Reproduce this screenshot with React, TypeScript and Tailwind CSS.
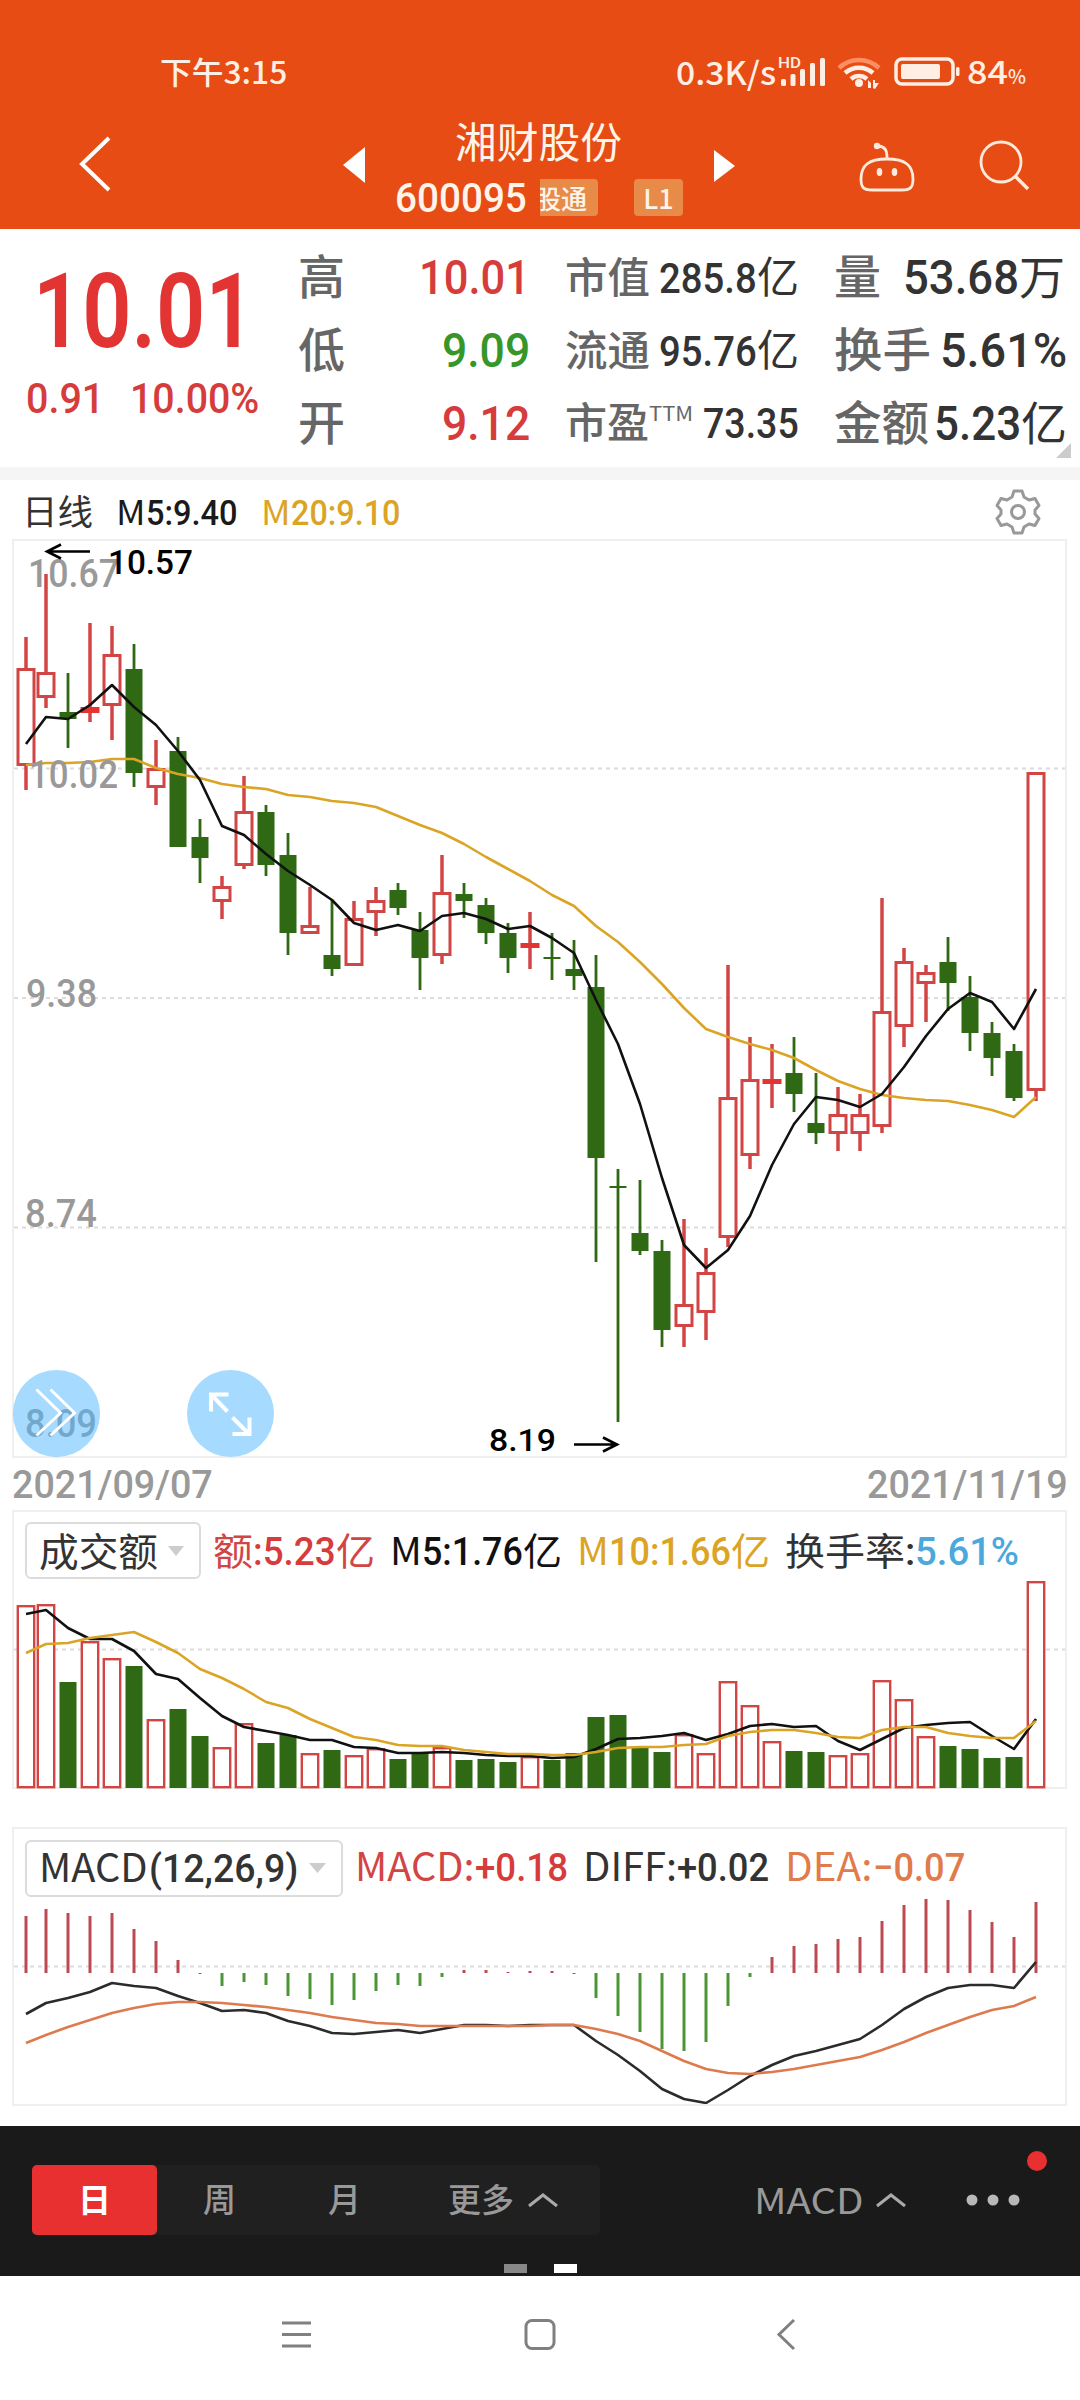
import React, { useLayoutEffect, useRef } from 'react';
import clsx from 'clsx';

type Point = [number, number];
// high, body top, body bottom, low, direction (u: hollow, f: flat up, d: down)
type Candle = [number, number, number, number, 'u' | 'f' | 'd'];

const cjk = "font-['Noto_Sans_CJK_SC','Noto_Sans',sans-serif]";
const num = "font-['Roboto','Noto_Sans_CJK_SC',sans-serif] font-medium";

const RED = '#d24545';
const GREEN = '#2f6914';
const GOLD = '#dba424';

const xs = Array.from({ length: 47 }, (_, i) => (i === 0 ? 26 : 46 + 22 * (i - 1)));

const candles: Candle[] = [
  [637, 668, 766, 790, 'u'], [574, 672, 698, 708, 'u'], [673, 712, 719, 748, 'd'], [623, 707, 713, 722, 'f'],
  [626, 654, 706, 740, 'u'], [644, 669, 773, 787, 'd'], [740, 768, 788, 805, 'u'], [737, 751, 847, 847, 'd'],
  [819, 837, 858, 883, 'd'], [876, 886, 902, 919, 'u'], [776, 811, 866, 869, 'u'], [805, 812, 865, 876, 'd'],
  [833, 855, 933, 955, 'd'], [887, 925, 934, 934, 'u'], [900, 955, 969, 976, 'd'], [901, 918, 966, 966, 'u'],
  [887, 900, 913, 936, 'u'], [883, 890, 908, 915, 'd'], [912, 930, 958, 990, 'd'], [855, 892, 956, 964, 'u'],
  [883, 894, 901, 918, 'd'], [898, 905, 933, 944, 'd'], [923, 933, 958, 973, 'd'], [912, 943, 948, 969, 'f'],
  [933, 957, 959, 980, 'd'], [940, 969, 976, 990, 'd'], [955, 987, 1158, 1262, 'd'], [1169, 1186, 1188, 1422, 'd'],
  [1180, 1233, 1251, 1255, 'd'], [1240, 1251, 1330, 1347, 'd'], [1219, 1304, 1327, 1347, 'u'], [1248, 1272, 1313, 1340, 'u'],
  [965, 1097, 1238, 1247, 'u'], [1037, 1079, 1156, 1169, 'u'], [1044, 1079, 1084, 1108, 'f'], [1037, 1073, 1094, 1112, 'd'],
  [1073, 1123, 1133, 1144, 'd'], [1087, 1114, 1134, 1151, 'u'], [1094, 1114, 1134, 1151, 'u'], [898, 1011, 1127, 1133, 'u'],
  [948, 961, 1027, 1047, 'u'], [965, 972, 984, 1022, 'u'], [937, 962, 983, 1011, 'd'], [976, 997, 1033, 1051, 'd'],
  [1022, 1033, 1058, 1076, 'd'], [1044, 1051, 1098, 1101, 'd'], [772, 772, 1091, 1101, 'u'],
];

const ma5 = [
  744, 717, 719, 705, 685, 707, 725, 751, 780, 826, 835, 854, 871, 885, 900, 923, 930, 925, 931, 916, 913, 919, 929, 926,
  938, 953, 1000, 1044, 1104, 1178, 1245, 1268, 1250, 1216, 1165, 1124, 1097, 1100, 1107, 1094, 1067, 1036, 1009, 993,
  1002, 1029, 989,
];
const ma20 = [
  765, 763, 763, 762, 759, 759, 768, 774, 778, 784, 787, 789, 795, 797, 801, 803, 807, 816, 825, 833, 844, 857, 869, 881,
  895, 906, 926, 942, 962, 984, 1008, 1029, 1037, 1044, 1050, 1058, 1070, 1081, 1089, 1095, 1098, 1100, 1101, 1105, 1110,
  1117, 1097,
];

const volumes = [
  1605, 1604, 1682, 1641, 1658, 1666, 1719, 1709, 1736, 1747, 1723, 1743, 1735, 1753, 1750, 1755, 1748, 1759, 1753, 1747,
  1760, 1759, 1762, 1756, 1760, 1753, 1717, 1715, 1748, 1752, 1734, 1753, 1681, 1705, 1741, 1751, 1752, 1755, 1753, 1680,
  1699, 1736, 1746, 1749, 1758, 1757, 1581,
];
const vol5 = [
  1614, 1610, 1628, 1639, 1639, 1651, 1674, 1679, 1698, 1716, 1727, 1731, 1735, 1740, 1740, 1747, 1748, 1753, 1753, 1752,
  1753, 1755, 1756, 1756, 1758, 1757, 1749, 1739, 1738, 1736, 1733, 1740, 1734, 1726, 1724, 1727, 1726, 1741, 1750, 1739,
  1728, 1725, 1723, 1722, 1736, 1749, 1719,
];
const vol10 = [
  1653, 1644, 1643, 1638, 1635, 1632, 1642, 1653, 1669, 1678, 1689, 1702, 1708, 1719, 1728, 1737, 1740, 1745, 1746, 1746,
  1750, 1752, 1754, 1754, 1755, 1755, 1752, 1748, 1747, 1747, 1745, 1744, 1736, 1732, 1730, 1730, 1733, 1737, 1738, 1730,
  1727, 1727, 1733, 1736, 1738, 1738, 1721,
];

const hist = [
  1916, 1909, 1913, 1916, 1913, 1929, 1941, 1960, 1974, 1986, 1982, 1985, 1996, 1999, 2005, 2000, 1991, 1985, 1986, 1977,
  1970, 1970, 1972, 1971, 1971, 1974, 1998, 2016, 2032, 2049, 2051, 2042, 2006, 1977, 1957, 1946, 1944, 1939, 1937, 1921,
  1905, 1899, 1900, 1910, 1922, 1937, 1902,
];
const diff = [
  2014, 2003, 1998, 1992, 1983, 1986, 1988, 1996, 2003, 2011, 2010, 2013, 2021, 2026, 2033, 2034, 2032, 2030, 2033, 2029,
  2025, 2025, 2026, 2025, 2025, 2025, 2041, 2055, 2071, 2089, 2099, 2103, 2090, 2076, 2065, 2056, 2051, 2045, 2039, 2025,
  2009, 1997, 1988, 1985, 1985, 1988, 1962,
];
const dea = [
  2043, 2035, 2027, 2020, 2013, 2008, 2004, 2002, 2002, 2003, 2005, 2007, 2010, 2013, 2017, 2020, 2023, 2024, 2026, 2026,
  2026, 2026, 2026, 2026, 2025, 2025, 2029, 2034, 2041, 2051, 2061, 2069, 2073, 2074, 2072, 2069, 2065, 2061, 2057, 2050,
  2042, 2033, 2025, 2017, 2010, 2006, 1997,
];

const toPoints = (ys: number[]) => ys.map((y, i): Point => [xs[i], y]).join(' ');

interface FitProps {
  className?: string;
  children: React.ReactNode;
}

// Squeezes or stretches one line of text to the width set on the outer box
const Fit: React.FC<FitProps> = ({ className = '', children }) => {
  const outer = useRef<HTMLDivElement>(null);
  const inner = useRef<HTMLSpanElement>(null);

  useLayoutEffect(() => {
    if (!outer.current || !inner.current) return;
    const scale = outer.current.clientWidth / inner.current.offsetWidth;
    inner.current.style.transform = `scaleX(${scale})`;
  }, []);

  return (
    <div className={clsx('shrink-0 whitespace-nowrap leading-none', className)}>
      <span ref={inner} className="inline-block origin-left">{children}</span>
      <div ref={outer} className="h-0 w-full" />
    </div>
  );
};

const Line = ({ ys, color, width = 2.6 }: { ys: number[]; color: string; width?: number }) => (
  <polyline points={toPoints(ys)} fill="none" stroke={color} strokeWidth={width} strokeLinejoin="round" />
);

const Grid = ({ y }: { y: number }) => (
  <line x1="14" x2="1066" y1={y} y2={y} stroke="#dcdcdc" strokeWidth="2" strokeDasharray="4 4" />
);

const ChartText = ({ x, y, w, size = 38, color = '#999', children }: {
  x: number; y: number; w: number; size?: number; color?: string; children: string;
}) => (
  <text x={x} y={y} textLength={w} lengthAdjust="spacingAndGlyphs" fontSize={size} fill={color} className={num}>
    {children}
  </text>
);

const StatusBar = () => (
  <div className="flex h-[118px] items-end pb-[28px] pl-[160px] text-[#ffeee4]">
    <Fit className={clsx(cjk, 'mb-[4px] w-[127px] text-[31px] font-medium')}>下午3:15</Fit>
    <Fit className={clsx(cjk, 'mb-[3px] ml-[389px] w-[100px] text-[32px] font-medium')}>0.3K/s</Fit>
    <svg className="ml-[2px] overflow-visible" width="252" height="36" viewBox="778 54 252 36">
      <text x="778" y="67.5" textLength="23" lengthAdjust="spacingAndGlyphs" fontSize="14" fill="#ffeee4" className={num}>HD</text>
      <g fill="#ffeee4">
        <rect x="781" y="79" width="5" height="7" rx="1.5" />
        <rect x="790.5" y="74" width="5" height="12" rx="1.5" />
        <rect x="800" y="69" width="5" height="17" rx="1.5" />
        <rect x="810" y="63" width="5" height="23" rx="1.5" />
        <rect x="820" y="58" width="5" height="28" rx="1.5" />
        <circle cx="859" cy="83" r="4" />
        <path d="M868 80l3 3v5h-3zM873 88V80h2v3h4l-4 6z" />
        <rect x="901" y="64" width="39" height="15" rx="2" />
        <rect x="956" y="67" width="3.5" height="9" rx="1.5" />
      </g>
      <g fill="none">
        <path d="M839 68a29 29 0 0 1 40 0" stroke="#ff8f62" strokeWidth="4.5" />
        <path d="M845 73a21 21 0 0 1 28 0M851 79a12.5 12.5 0 0 1 16 0" stroke="#ffeee4" strokeWidth="4.5" />
        <rect x="896" y="59" width="57" height="25" rx="6" stroke="#ffeee4" strokeWidth="3.5" />
      </g>
      <text x="967" y="83.5" textLength="41" lengthAdjust="spacingAndGlyphs" fontSize="32" fontWeight="500" fill="#ffeee4" className={cjk}>84</text>
      <text x="1008" y="83.5" textLength="18" lengthAdjust="spacingAndGlyphs" fontSize="20" fontWeight="500" fill="#ffeee4" className={cjk}>%</text>
    </svg>
  </div>
);

const TitleBar = () => (
  <div className="flex h-[111px] items-start text-[#fff4ea]">
    <svg className="ml-[76px] mt-[16px]" width="40" height="60" viewBox="76 134 40 60" fill="none" stroke="#fff" strokeWidth="4">
      <path d="M109 138L82 164l27 26" />
    </svg>
    <svg className="ml-[227px] mt-[28px]" width="22" height="38" viewBox="0 0 22 38" fill="#fff">
      <path d="M22 1v36L0 19z" />
    </svg>
    <div className="ml-[30px] w-[289px]">
      <Fit className={clsx(cjk, 'ml-[60px] mt-px w-[167px] text-[42px]')}>湘财股份</Fit>
      <div className="mt-[17px] flex items-start">
        <Fit className={clsx(num, 'w-[132px] text-[41px]')}>600095</Fit>
        <div className="ml-[13px] mt-px flex h-[37px] w-[58px] items-center justify-end overflow-hidden rounded-r-[4px] bg-[#e88b48] pr-[11px]">
          <span className={clsx(cjk, 'shrink-0 text-[26px] leading-[34px] font-medium')}>股通</span>
        </div>
        <div className="ml-[36px] mt-px flex h-[37px] w-[49px] items-center justify-center rounded-[4px] bg-[#e88b48]">
          <span className={clsx(cjk, 'text-[27px] leading-[34px] font-medium')}>L1</span>
        </div>
      </div>
    </div>
    <svg className="ml-[30px] mt-[31px]" width="22" height="34" viewBox="0 0 22 34" fill="#fff">
      <path d="M0 1v32l21-16z" />
    </svg>
    <svg className="ml-[121px] mt-[22px]" width="60" height="54" viewBox="857 140 60 54" fill="none" stroke="#ffeadb" strokeWidth="2.8">
      <path d="M887 158c0-8-2-11-8-12" />
      <circle cx="877" cy="146" r="3.2" fill="#ffeadb" stroke="none" />
      <path d="M861 179c0-14 8-20 26-20s26 6 26 20c0 9-3 11-11 11h-30c-8 0-11-2-11-11z" />
      <ellipse cx="879.5" cy="172" rx="2.8" ry="4" fill="#ffeadb" stroke="none" />
      <ellipse cx="894.5" cy="172" rx="2.8" ry="4" fill="#ffeadb" stroke="none" />
    </svg>
    <svg className="ml-[61px] mt-[20px]" width="54" height="54" viewBox="978 138 54 54" fill="none" stroke="#ffeadb" strokeWidth="2.8">
      <circle cx="1001" cy="162" r="20" />
      <path d="M1015 176l13 13" strokeWidth="3.5" />
    </svg>
  </div>
);

const label = clsx(cjk, 'text-[#666] font-medium');

const Quote = () => (
  <section className="relative flex h-[238px] bg-white">
    <div className="w-[298px] text-[#e33434]">
      <Fit className="ml-[33px] mt-[31px] w-[222px] font-['Roboto'] text-[103px] font-semibold">10.01</Fit>
      <div className="mt-[14px] flex text-[43px] text-[#d63c3c]">
        <Fit className={clsx(num, 'ml-[26px] w-[78px]')}>0.91</Fit>
        <Fit className={clsx(num, 'ml-[26px] w-[129px]')}>10.00%</Fit>
      </div>
    </div>
    <div className="w-[232px] text-[49px] text-[#d63c3c]">
      <div className="mt-[21px] flex h-[73px] items-baseline justify-between">
        <Fit className={clsx(label, 'w-[47px] text-[47px]')}>高</Fit>
        <Fit className={clsx(num, 'w-[111px]')}>10.01</Fit>
      </div>
      <div className="flex h-[73px] items-baseline justify-between">
        <Fit className={clsx(label, 'w-[47px] text-[47px]')}>低</Fit>
        <Fit className={clsx(num, 'w-[88px] text-[#36962a]')}>9.09</Fit>
      </div>
      <div className="flex h-[73px] items-baseline justify-between">
        <Fit className={clsx(label, 'w-[47px] text-[47px]')}>开</Fit>
        <Fit className={clsx(num, 'w-[88px]')}>9.12</Fit>
      </div>
    </div>
    <div className="ml-[35px] w-[234px] text-[43px] text-[#333]">
      <div className="mt-[24px] flex h-[73px] items-baseline">
        <Fit className={clsx(label, 'w-[85px] text-[42px]')}>市值</Fit>
        <Fit className={clsx(num, 'ml-[9px] w-[98px]')}>285.8</Fit>
        <Fit className={clsx(cjk, 'w-[42px] text-[43px]')}>亿</Fit>
      </div>
      <div className="flex h-[73px] items-baseline">
        <Fit className={clsx(label, 'w-[85px] text-[42px]')}>流通</Fit>
        <Fit className={clsx(num, 'ml-[9px] w-[98px]')}>95.76</Fit>
        <Fit className={clsx(cjk, 'w-[42px] text-[43px]')}>亿</Fit>
      </div>
      <div className="flex h-[73px] items-baseline">
        <Fit className={clsx(label, 'w-[84px] text-[42px]')}>市盈</Fit>
        <Fit className={clsx(cjk, 'relative -top-[17px] w-[44px] text-[20px] text-[#666]')}>TTM</Fit>
        <Fit className={clsx(num, 'ml-[10px] w-[96px]')}>73.35</Fit>
      </div>
    </div>
    <div className="ml-[35px] w-[234px] text-[49px] text-[#333]">
      <div className="mt-[21px] flex h-[73px] items-baseline">
        <Fit className={clsx(label, 'w-[47px] text-[47px]')}>量</Fit>
        <Fit className={clsx(num, 'ml-[22px] w-[116px]')}>53.68</Fit>
        <Fit className={clsx(cjk, 'w-[46px] text-[46px]')}>万</Fit>
      </div>
      <div className="flex h-[73px] items-baseline">
        <Fit className={clsx(label, 'w-[97px] text-[47px]')}>换手</Fit>
        <Fit className={clsx(num, 'ml-[9px] w-[127px]')}>5.61%</Fit>
      </div>
      <div className="flex h-[73px] items-baseline">
        <Fit className={clsx(label, 'w-[95px] text-[47px]')}>金额</Fit>
        <Fit className={clsx(num, 'ml-[5px] w-[87px]')}>5.23</Fit>
        <Fit className={clsx(cjk, 'w-[46px] text-[46px]')}>亿</Fit>
      </div>
    </div>
    <svg className="absolute right-[9px] bottom-[9px]" width="15" height="15" viewBox="0 0 15 15" fill="#ccc">
      <path d="M15 0v15H0z" />
    </svg>
  </section>
);

const PriceHeader = () => (
  <div className="flex h-[59px] items-baseline pt-[12px] text-[35px] text-[#1a1a1a]">
    <Fit className={clsx(cjk, 'ml-[22px] w-[71px] text-[35px] text-[#333]')}>日线</Fit>
    <Fit className={clsx(cjk, 'ml-[23px] w-[30px] text-[34px]')}>M</Fit>
    <Fit className={clsx(num, 'w-[92px]')}>5:9.40</Fit>
    <Fit className={clsx(cjk, 'ml-[23px] w-[30px] text-[34px] text-[#dba424]')}>M</Fit>
    <Fit className={clsx(num, 'w-[109px] text-[#dba424]')}>20:9.10</Fit>
    <svg className="-mt-[3px] ml-[595px] self-start" width="46" height="46" viewBox="0 0 46 46" fill="none" stroke="#999" strokeWidth="3" strokeLinejoin="round">
      <path d="M19 2h8l2 6 5 3 6-1.5 4 7-4 4.5v4l4 4.5-4 7-6-1.5-5 3-2 6h-8l-2-6-5-3-6 1.5-4-7 4-4.5v-4l-4-4.5 4-7 6 1.5 5-3z" />
      <circle cx="23" cy="23" r="6.5" />
    </svg>
  </div>
);

const PriceChart = () => (
  <div className="relative ml-[12px] h-[919px] w-[1055px] border-2 border-[#efefef]">
    <svg width="1051" height="915" viewBox="14 541 1051 915" className="block">
      <Grid y={768.5} />
      <Grid y={998} />
      <Grid y={1227.5} />
      {candles.map(([high, top, bottom, low, dir], i) => {
        const x = xs[i];
        const color = dir === 'd' ? GREEN : RED;
        return (
          <g key={x}>
            {high < top && <line x1={x} x2={x} y1={high} y2={top} stroke={color} strokeWidth={dir === 'd' ? 2.8 : 3.5} />}
            {low > bottom && <line x1={x} x2={x} y1={bottom} y2={low} stroke={color} strokeWidth={dir === 'd' ? 2.8 : 3.5} />}
            {dir === 'u' ? (
              <rect x={x - 8} y={top + 1.5} width="16" height={bottom - top - 3} fill="#fff" stroke={color} strokeWidth="3" />
            ) : (
              <rect x={x - (dir === 'd' ? 8.5 : 9.5)} y={top} width={dir === 'd' ? 17 : 19} height={bottom - top} fill={dir === 'd' ? GREEN : '#e33434'} />
            )}
          </g>
        );
      })}
      <Line ys={ma20} color={GOLD} />
      <Line ys={ma5} color="#111" />
      <ChartText x={28} y={587} w={91}>10.67</ChartText>
      <ChartText x={29} y={788} w={89}>10.02</ChartText>
      <ChartText x={26} y={1007} w={71}>9.38</ChartText>
      <ChartText x={25} y={1227} w={72}>8.74</ChartText>
      <ChartText x={25} y={1437} w={72}>8.09</ChartText>
      <ChartText x={108} y={574} w={85} size={34} color="#000">10.57</ChartText>
      <ChartText x={489} y={1451} w={67} size={32} color="#000">8.19</ChartText>
      <g fill="none" stroke="#000" strokeWidth="2.6">
        <path d="M90 551.5H47M61 544.5L47 551.5l14 7" />
        <path d="M574 1444.5h43M603 1437.5l14 7-14 7" />
      </g>
    </svg>
    {/* floating chart buttons */}
    <button className="absolute -left-px bottom-[-1px] h-[87px] w-[87px] rounded-full bg-[#4db8ff]/50">
      <svg width="87" height="87" viewBox="13.5 1369.5 87 87" fill="none" stroke="#fff" strokeWidth="3">
        <path d="M37 1389l24 23.5-24 22.5M51 1389l24 23.5-24 22.5" />
      </svg>
    </button>
    <button className="absolute bottom-[-1px] left-[173px] h-[87px] w-[87px] rounded-full bg-[#a6dbff]">
      <svg width="87" height="87" viewBox="187.5 1369.5 87 87" fill="none" stroke="#fff" strokeWidth="4">
        <path d="M229 1394h-17.5v17M212 1394.5l16 16.5M233 1417l16 16M233 1433.5h17V1417" />
      </svg>
    </button>
  </div>
);

const VolumePanel = () => (
  <div className="ml-[12px] h-[279px] w-[1055px] border-2 border-b-0 border-[#efefef]">
    <div className="flex h-[68px] items-center text-[39px]">
      <div className="ml-[11px] mt-[9px] flex h-[57px] w-[176px] items-center rounded-[6px] border-2 border-[#dcdcdc]">
        <Fit className={clsx(cjk, '-mt-[2px] ml-[12px] w-[119px] text-[39px] text-[#333]')}>成交额</Fit>
        <svg className="ml-[10px]" width="16" height="10" viewBox="0 0 16 10" fill="#ccc"><path d="M0 0h16L8 10z" /></svg>
      </div>
      <div className="mt-[9px] flex items-baseline">
        <Fit className={clsx(cjk, 'ml-[12px] w-[40px] text-[38px] text-[#d24545]')}>额</Fit>
        <Fit className={clsx(num, 'w-[83px] text-[#d63c3c]')}>:5.23</Fit>
        <Fit className={clsx(cjk, 'w-[39px] text-[38px] text-[#d24545]')}>亿</Fit>
        <Fit className={clsx(cjk, 'ml-[15px] w-[32px] text-[38px] text-[#111]')}>M</Fit>
        <Fit className={clsx(num, 'w-[101px] text-[#111]')}>5:1.76</Fit>
        <Fit className={clsx(cjk, 'w-[39px] text-[38px] text-[#111]')}>亿</Fit>
        <Fit className={clsx(cjk, 'ml-[15px] w-[32px] text-[38px] text-[#dba424]')}>M</Fit>
        <Fit className={clsx(num, 'w-[122px] text-[#dba424]')}>10:1.66</Fit>
        <Fit className={clsx(cjk, 'w-[39px] text-[38px] text-[#dba424]')}>亿</Fit>
        <Fit className={clsx(cjk, 'ml-[15px] w-[120px] text-[38px] text-[#333]')}>换手率</Fit>
        <Fit className={clsx(num, 'w-[10px] text-[#333]')}>:</Fit>
        <Fit className={clsx(num, 'w-[104px] text-[#4aa8dc]')}>5.61%</Fit>
      </div>
    </div>
    <svg width="1051" height="210" viewBox="14 1580 1051 210" className="block">
      <Grid y={1649.5} />
      <line x1="14" x2="1066" y1="1788" y2="1788" stroke="#efefef" strokeWidth="2" />
      {volumes.map((top, i) =>
        candles[i][4] === 'd' ? (
          <rect key={i} x={xs[i] - 8.5} y={top} width="17" height={1788 - top} fill={GREEN} />
        ) : (
          <rect key={i} x={xs[i] - 8.2} y={top + 1.2} width="16.4" height={1786 - top} fill="#fff" stroke={RED} strokeWidth="2.4" />
        ),
      )}
      <Line ys={vol5} color="#111" />
      <Line ys={vol10} color={GOLD} />
    </svg>
  </div>
);

const MacdPanel = () => (
  <div className="ml-[12px] mt-[38px] h-[279px] w-[1055px] border-2 border-[#efefef]">
    <div className="flex h-[69px] items-center text-[39px]">
      <div className="ml-[11px] mt-[9px] flex h-[57px] w-[318px] items-center rounded-[6px] border-2 border-[#dcdcdc] text-[#333]">
        <div className="-mt-px flex items-baseline">
          <Fit className={clsx(cjk, 'ml-[12px] w-[109px] text-[39px]')}>MACD</Fit>
          <Fit className={clsx(num, 'ml-[1px] w-[149px]')}>(12,26,9)</Fit>
        </div>
        <svg className="ml-[11px]" width="17" height="10" viewBox="0 0 17 10" fill="#ccc"><path d="M0 0h17L8.5 10z" /></svg>
      </div>
      <div className="mt-[5px] flex items-baseline">
        <Fit className={clsx(cjk, 'ml-[12px] w-[120px] text-[39px] text-[#d24545]')}>MACD:</Fit>
        <Fit className={clsx(num, 'w-[93px] text-[#d63c3c]')}>+0.18</Fit>
        <Fit className={clsx(cjk, 'ml-[15px] w-[94px] text-[39px] text-[#333]')}>DIFF:</Fit>
        <Fit className={clsx(num, 'w-[92px] text-[#333]')}>+0.02</Fit>
        <Fit className={clsx(cjk, 'ml-[16px] w-[87px] text-[39px] text-[#e07b4c]')}>DEA:</Fit>
        <Fit className={clsx(num, 'ml-[1px] w-[92px] text-[#e07b4c]')}>−0.07</Fit>
      </div>
    </div>
    <svg width="1051" height="206" viewBox="14 1898 1051 206" className="block">
      <Grid y={1966.5} />
      {hist.map((y, i) => (
        <line key={i} x1={xs[i]} x2={xs[i]} y1="1973" y2={y} stroke={y > 1974 ? '#4a9636' : '#bd4a50'} strokeWidth="3" />
      ))}
      <Line ys={diff} color="#2b2b2b" />
      <Line ys={dea} color="#dd7a4e" />
    </svg>
  </div>
);

const Caret = ({ className }: { className: string }) => (
  <svg className={className} width="30" height="16" viewBox="0 0 30 16" fill="none" stroke="#aaa" strokeWidth="3">
    <path d="M1 14L15 3l14 11" />
  </svg>
);

const PeriodBar = () => (
  <nav className={clsx(cjk, 'relative mt-[20px] h-[150px] bg-[#1a1a1a] pt-[39px] text-[#999]')}>
    <div className="flex h-[70px] items-center pl-[32px]">
      <div className="flex h-[70px] w-[568px] items-center rounded-[5px] bg-[#202020] text-[33px] leading-[67px] font-medium">
        <span className="h-[70px] w-[125px] rounded-[5px] bg-[#e93030] text-center font-bold text-white">日</span>
        <span className="h-[70px] w-[125px] text-center">周</span>
        <span className="h-[70px] w-[125px] text-center">月</span>
        <span className="ml-[41px] h-[70px] w-[66px]">更多</span>
        <Caret className="ml-[14px]" />
      </div>
      <Fit className="-mt-[3px] ml-[154px] w-[110px] text-[35px]">MACD</Fit>
      <Caret className="ml-[12px]" />
      <svg className="ml-[60px]" width="56" height="12" viewBox="0 0 56 12" fill="#b8b8b8">
        <circle cx="6" cy="6" r="5.5" />
        <circle cx="27" cy="6" r="5.5" />
        <circle cx="48" cy="6" r="5.5" />
      </svg>
    </div>
    <span className="absolute right-[33px] top-[25px] h-5 w-5 rounded-full bg-[#e93030]" />
    <div className="mt-[29px] flex justify-center gap-[27px]">
      <span className="h-[9px] w-[23px] bg-[#888]" />
      <span className="h-[9px] w-[23px] bg-white" />
    </div>
  </nav>
);

const SystemNav = () => (
  <div className="flex h-[124px] justify-center bg-white pt-[40px]">
    <svg width="540" height="38" viewBox="270 2316 540 38" fill="none" stroke="#808080" strokeWidth="3">
      <path d="M282 2323h29M282 2334.5h29M282 2346h29" />
      <rect x="526" y="2320.5" width="28" height="28" rx="6" />
      <path d="M794 2320l-15 14.5 15 14.5" />
    </svg>
  </div>
);

export default function App() {
  return (
    <div className="h-[2400px] w-[1080px] overflow-hidden bg-white">
      <header className="h-[229px] bg-[#e64c13]">
        <StatusBar />
        <TitleBar />
      </header>
      <Quote />
      <div className="h-[13px] bg-[#f5f5f5]" />
      <PriceHeader />
      <PriceChart />
      <div className={clsx(num, 'flex h-[52px] justify-between pt-[8px] pr-[12px] pl-[12px] text-[39px] text-[#999]')}>
        <Fit className="w-[201px]">2021/09/07</Fit>
        <Fit className="w-[201px]">2021/11/19</Fit>
      </div>
      <VolumePanel />
      <MacdPanel />
      <PeriodBar />
      <SystemNav />
    </div>
  );
}
